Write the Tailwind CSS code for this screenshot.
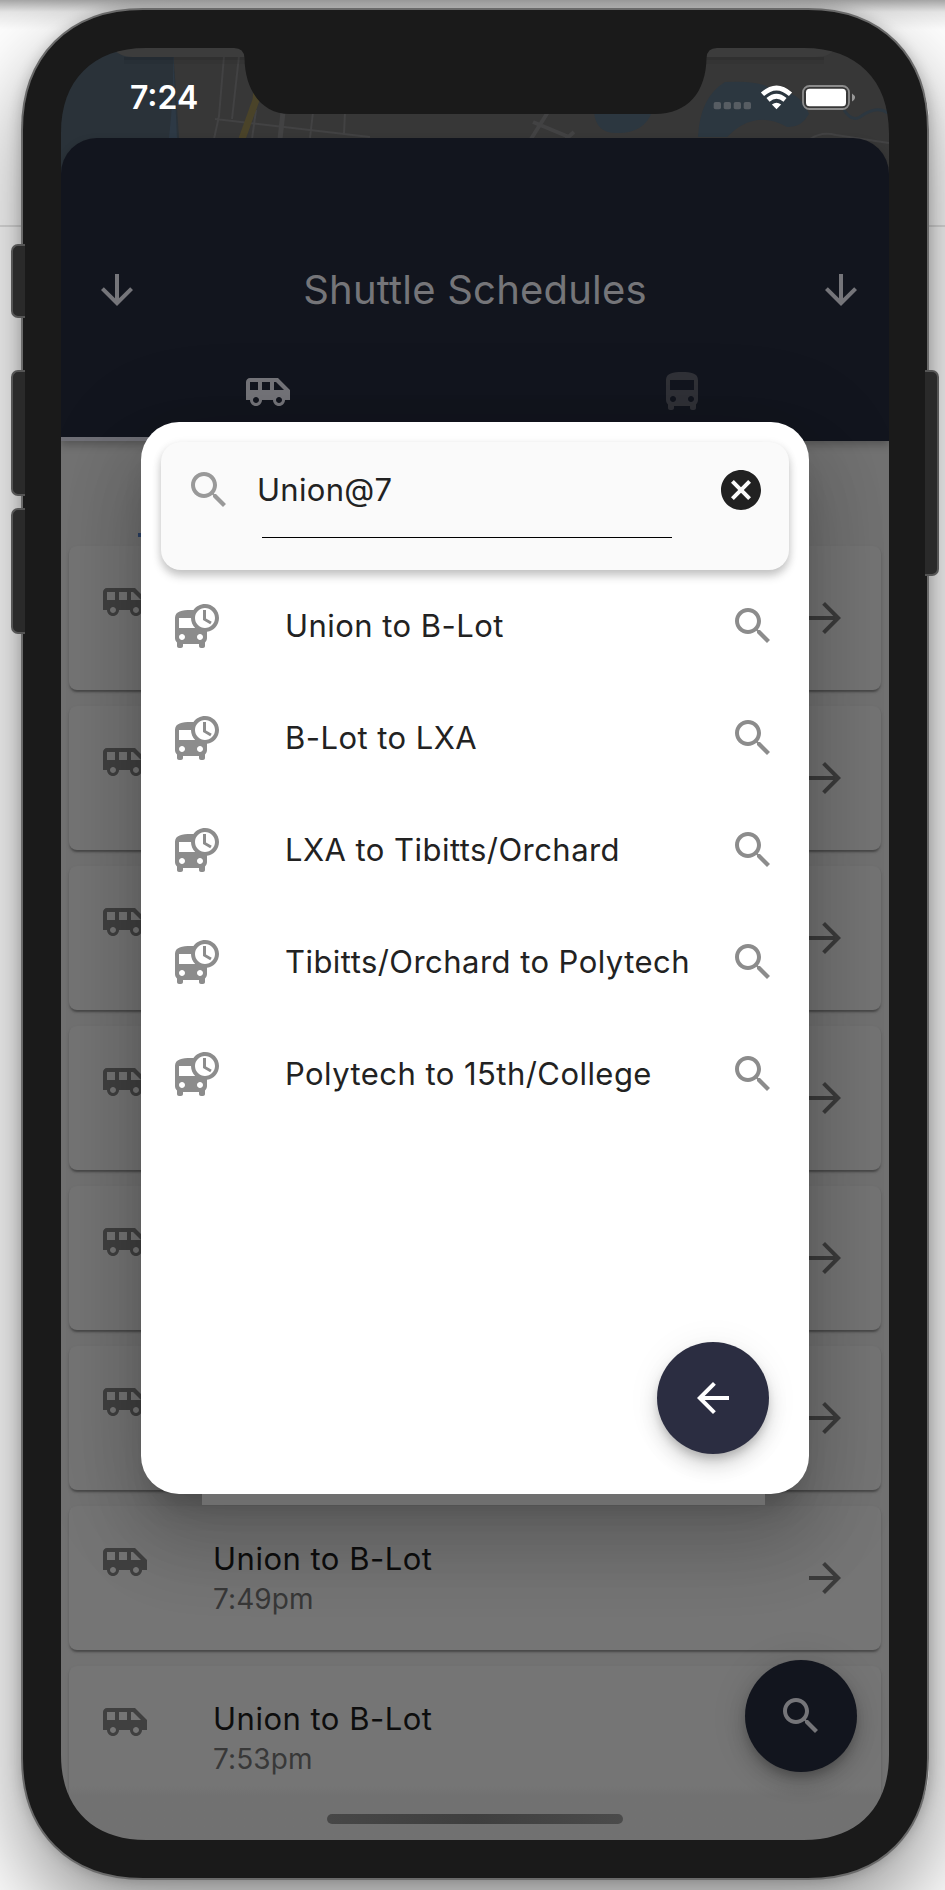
<!DOCTYPE html>
<html lang="en">
<head>
<meta charset="utf-8">
<title>Shuttle Schedules</title>
<script src="https://cdn.jsdelivr.net/npm/@tailwindcss/browser@4"></script>
</head>
<body class="bg-white">
<svg class="hidden">
  <symbol id="van" viewBox="0 0 24 24"><path d="M17 5H3c-1.1 0-2 .89-2 2v9h2c0 1.65 1.34 3 3 3s3-1.35 3-3h5.5c0 1.65 1.34 3 3 3s3-1.35 3-3H23v-5l-6-6zM3 11V7h4v4H3zm3 6.5c-.83 0-1.5-.67-1.5-1.5s.67-1.5 1.5-1.5 1.5.67 1.5 1.5-.67 1.5-1.5 1.5zm7-6.5H9V7h4v4zm4.5 6.5c-.83 0-1.5-.67-1.5-1.5s.67-1.5 1.5-1.5 1.5.67 1.5 1.5-.67 1.5-1.5 1.5zM15 11V7h1l4 4h-5z"/></symbol>
  <symbol id="bus" viewBox="0 0 24 24"><path d="M4 16c0 .88.39 1.67 1 2.22V20c0 .55.45 1 1 1h1c.55 0 1-.45 1-1v-1h8v1c0 .55.45 1 1 1h1c.55 0 1-.45 1-1v-1.78c.61-.55 1-1.34 1-2.22V6c0-3.5-3.58-4-8-4s-8 .5-8 4v10zm3.5 1c-.83 0-1.5-.67-1.5-1.5S6.67 14 7.5 14s1.5.67 1.5 1.5S8.33 17 7.5 17zm9 0c-.83 0-1.5-.67-1.5-1.5s.67-1.5 1.5-1.5 1.5.67 1.5 1.5-.67 1.5-1.5 1.5zm1.5-6H6V6h12v5z"/></symbol>
  <symbol id="departure" viewBox="0 0 24 24"><path d="M16 1c-2.4 0-4.52 1.21-5.78 3.05.01-.01.01-.02.02-.03C9.84 4 9.42 4 9 4c-4.42 0-8 .5-8 4v10c0 .88.39 1.67 1 2.22V22c0 .55.45 1 1 1h1c.55 0 1-.45 1-1v-1h8v1c0 .55.45 1 1 1h1c.55 0 1-.45 1-1v-1.78c.61-.55 1-1.34 1-2.22v-3.08c3.39-.49 6-3.39 6-6.92 0-3.87-3.13-7-7-7zM4.5 19c-.83 0-1.5-.67-1.5-1.5S3.67 16 4.5 16s1.5.67 1.5 1.5S5.33 19 4.5 19zM3 13V8h6c0 1.96.81 3.73 2.11 5H3zm10.5 6c-.83 0-1.5-.67-1.5-1.5s.67-1.5 1.5-1.5 1.5.67 1.5 1.5-.67 1.5-1.5 1.5zm2.5-6c-2.76 0-5-2.24-5-5s2.24-5 5-5 5 2.24 5 5-2.24 5-5 5zm.5-9H15v5l3.62 2.16.75-1.23-2.87-1.68z"/></symbol>
  <symbol id="search" viewBox="0 0 24 24"><path d="M15.5 14h-.79l-.28-.27C15.41 12.59 16 11.11 16 9.5 16 5.91 13.09 3 9.5 3S3 5.91 3 9.5 5.91 16 9.5 16c1.61 0 3.09-.59 4.23-1.57l.27.28v.79l5 4.99L20.49 19l-4.99-5zm-6 0C7.01 14 5 11.99 5 9.5S7.01 5 9.5 5 14 7.01 14 9.5 11.99 14 9.5 14z"/></symbol>
  <symbol id="down" viewBox="0 0 24 24"><path d="M20 12l-1.41-1.41L13 16.17V4h-2v12.17l-5.58-5.59L4 12l8 8 8-8z"/></symbol>
  <symbol id="forward" viewBox="0 0 24 24"><path d="M12 4l-1.41 1.41L16.17 11H4v2h12.17l-5.58 5.59L12 20l8-8z"/></symbol>
  <symbol id="back" viewBox="0 0 24 24"><path d="M20 11H7.83l5.59-5.59L12 4l-8 8 8 8 1.41-1.41L7.83 13H20v-2z"/></symbol>
  <symbol id="cancel" viewBox="0 0 24 24"><path d="M12 2C6.47 2 2 6.47 2 12s4.47 10 10 10 10-4.47 10-10S17.53 2 12 2zm5 13.59L15.59 17 12 13.41 8.41 17 7 15.59 10.59 12 7 8.41 8.41 7 12 10.59 15.59 7 17 8.41 13.41 12 17 15.59z"/></symbol>
</svg>

<div class="relative w-[945px] h-[1890px] overflow-hidden bg-white px-[61px] pt-12 font-['Inter',sans-serif]">
  <!-- desktop behind the device -->
  <div class="absolute inset-x-0 top-[225px] h-[2px] bg-[#e2e2e2]"></div>
  <div class="absolute left-[22px] top-[9px] w-[907px] h-[1870px] rounded-[115px] shadow-[0_40px_90px_4px_rgba(0,0,0,0.42),0_0_14px_1px_rgba(0,0,0,0.22)]"></div>
  <div class="absolute inset-x-0 top-0 h-[30px] bg-linear-to-b from-black/35 via-black/10 via-40% to-transparent"></div>

  <!-- screen -->
  <div class="relative w-[828px] h-[1792px] overflow-hidden rounded-[60px] bg-[#373737] flex flex-col">
    <svg class="absolute left-0 top-0" width="828" height="140" viewBox="61 48 828 140" fill="none">
      <path d="M61 48H173L179 138V188H61z" fill="#2a3239"/>
      <path d="M173 48l4 90h-8q5-44 4-90z" fill="#2d3945"/>
      <path d="M224 56l-5 60-5 23M239 56l-7 63M215 119l155 18M256 110l-4 29M313 112l-3 26M345 112l-1 22" stroke="#424243" stroke-width="2"/>
      <path d="M283 112l-3 27" stroke="#424243" stroke-width="5"/>
      <path d="M257 88l-1 12-14 39" stroke="#4a4329" stroke-width="7"/>
      <path d="M548 112l-17 27M533 122l36 15M566 139l8-7" stroke="#424243" stroke-width="4"/>
      <path d="M594 112q2 22 24 21 26 0 34-21z" fill="#2c3740"/>
      <path d="M698 137q2-40 27-55 38-2 46 8 30 0 38 24-8 14-22 13-18-10-34-6-12 2-26 16z" fill="#2c3740"/>
      <path d="M844 110q8 12 16 7 16-12 28-4" stroke="#2c3740" stroke-width="3"/>
      <path d="M810 139q12-8 26-4l53 8" stroke="#424243" stroke-width="2"/>
      <rect x="124" y="57" width="700" height="3" fill="#000" opacity=".12"/>
      <rect x="124" y="60" width="700" height="4" fill="#000" opacity=".05"/>
      <path d="M112 48h724q-6 9-20 9H132q-12 0-20-9z" fill="#3c3c3c"/>
    </svg>

    <header class="relative mt-[90px] h-[303px] shrink-0 rounded-t-[36px] bg-[#12151e] shadow-[0_4px_8px_rgba(0,0,0,0.25)] text-[#757579]">
      <div class="pt-[102px] pl-8 pr-6 flex items-center justify-between h-[202px]">
        <svg class="size-12 fill-[#75757a]"><use href="#down"/></svg>
        <h1 class="text-[40px] font-normal tracking-[0.2px] leading-none -ml-2">Shuttle Schedules</h1>
        <svg class="size-12 fill-[#75757a]"><use href="#down"/></svg>
      </div>
      <div class="grid grid-cols-2 h-[101px]">
        <div class="flex justify-center pt-7 border-b-4 border-[#6f6f76]"><svg class="size-12 fill-[#75757a]"><use href="#van"/></svg></div>
        <div class="flex justify-center pt-7"><svg class="size-12 fill-[#303137]"><use href="#bus"/></svg></div>
      </div>
    </header>

    <main class="grow bg-[#727272] pt-[105px] px-2 flex flex-col gap-4" id="list"></main>

    <!-- floating search button -->
    <div class="absolute left-[684px] top-[1612px] size-28 rounded-full bg-[#12151e] flex items-center justify-center shadow-[0_6px_10px_-2px_rgba(0,0,0,0.2),0_12px_20px_rgba(0,0,0,0.14),0_2px_36px_rgba(0,0,0,0.12)]">
      <svg class="size-12 fill-[#757579]"><use href="#search"/></svg>
    </div>
    <div class="absolute left-[266px] top-[1766px] w-[296px] h-[10px] rounded-full bg-linear-to-r from-[#474747] via-[#3f3f3f] to-[#4b4b4b]"></div>
    <div class="absolute left-[77px] top-[485px] w-3 h-1 bg-[#2b4165]"></div>

    <!-- dialog -->
    <div class="absolute left-20 top-[374px] w-[668px] h-[1072px] rounded-[38px] bg-white px-5 pt-5 shadow-[0_22px_30px_-14px_rgba(0,0,0,0.2),0_48px_76px_6px_rgba(0,0,0,0.14),0_18px_92px_16px_rgba(0,0,0,0.12)]">
      <div class="absolute left-[61px] top-full w-[563px] h-[11px] bg-[#6f6f6f]"></div>
      <div class="h-[128px] rounded-[20px] bg-[#fafafa] shadow-[0_6px_10px_rgba(0,0,0,0.2),0_2px_10px_rgba(0,0,0,0.08)] pt-6 pl-6 pr-6 flex items-start">
        <svg class="size-12 shrink-0 fill-[#999]"><use href="#search"/></svg>
        <div class="ml-6 w-[415px] h-[72px] flex flex-col">
          <span class="h-12 flex items-center text-[31px] tracking-[0.3px] text-[#222]">Union@7</span>
          <span class="mt-[23px] ml-[5px] h-px shrink-0 w-[410px] bg-black"></span>
        </div>
        <svg class="size-12 ml-auto shrink-0 fill-[#212121]"><use href="#cancel"/></svg>
      </div>
      <ul id="suggestions" class="-mx-5"></ul>
      <div class="absolute left-[516px] top-[920px] size-28 rounded-full bg-[#2b2d41] flex items-center justify-center shadow-[0_6px_10px_-2px_rgba(0,0,0,0.2),0_12px_20px_rgba(0,0,0,0.14),0_2px_36px_rgba(0,0,0,0.06)]">
        <svg class="size-12 fill-white"><use href="#back"/></svg>
      </div>
    </div>
  </div>

  <!-- device frame -->
  <svg class="absolute left-0 top-0" width="945" height="1890" fill="none">
    <path fill="#1a1a1a" fill-rule="evenodd" d="M22 130C22 56 69 9 143 9H808C882 9 928 56 928 130V1758C928 1832 882 1879 808 1879H143C69 1879 22 1832 22 1758Z
      M61 133V1755C61 1808 93 1840 146 1840H804C857 1840 889 1808 889 1755V133C889 80 857 48 804 48H717Q707 48 706.500 58C706 92 688 114 655 114H290C263 114 245 92 244.500 58Q244 48 234 48H146C93 48 61 80 61 133Z"/>
    <path stroke="#6a6a6a" stroke-width="2" d="M22 130C22 56 69 9 143 9H808C882 9 928 56 928 130V1758C928 1832 882 1879 808 1879H143C69 1879 22 1832 22 1758Z"/>
  </svg>

  <!-- side buttons -->
  <div class="absolute left-[11px] top-[244px] w-[14px] h-[74px] rounded-l-[7px] bg-[#2a2a2a] border-2 border-r-0 border-[#555]"></div>
  <div class="absolute left-[11px] top-[370px] w-[14px] h-[126px] rounded-l-[7px] bg-[#2a2a2a] border-2 border-r-0 border-[#555]"></div>
  <div class="absolute left-[11px] top-[508px] w-[14px] h-[126px] rounded-l-[7px] bg-[#2a2a2a] border-2 border-r-0 border-[#555]"></div>
  <div class="absolute left-[925px] top-[370px] w-[14px] h-[206px] rounded-r-[7px] bg-[#2a2a2a] border-2 border-l-0 border-[#555]"></div>

  <!-- status bar -->
  <div class="absolute left-[130px] top-[82px] h-8 flex items-center text-[32px] font-semibold text-white leading-none">7:24</div>
  <svg class="absolute left-[710px] top-[80px]" width="150" height="34" viewBox="710 80 150 34" fill="none">
    <g fill="#575d63"><rect x="713.700" y="102" width="7.300" height="7.300" rx="1.800"/><rect x="723.700" y="102" width="7.300" height="7.300" rx="1.800"/><rect x="733.700" y="102" width="7.300" height="7.300" rx="1.800"/><rect x="743.700" y="102" width="7.300" height="7.300" rx="1.800"/></g>
    <path fill="#fff" d="M776.500 109.200l-4.600-4.600q4.600-3.600 9.200 0z"/>
    <path stroke="#fff" stroke-width="4.800" d="M762.500 94.300q14-12.600 28 0M768 99.800q8.500-7.200 17 0"/>
    <rect x="803" y="86" width="46" height="23" rx="6.500" stroke="#8c8c8c" stroke-width="1.800"/>
    <rect x="806" y="88.700" width="40" height="17.600" rx="3.600" fill="#fff"/>
    <path d="M852 93.500q6 4 0 8z" fill="#999"/>
  </svg>
</div>

<template id="card">
  <article class="h-36 shrink-0 rounded-lg bg-[#757575] shadow-[0_4px_2px_-2px_rgba(0,0,0,0.2),0_2px_2px_rgba(0,0,0,0.14),0_2px_4px_rgba(0,0,0,0.08)] px-8 flex items-start last:h-[200px] last:bg-linear-to-b last:from-[#757575] last:from-60% last:to-[#717171] last:to-65%">
    <svg class="size-12 mt-8 fill-[#404040]"><use href="#van"/></svg>
    <div class="ml-16 mt-[34px] grow" data-label></div>
    <svg class="size-12 mt-12 fill-[#3c3c3c]"><use href="#forward"/></svg>
  </article>
</template>
<template id="label">
  <div class="text-[31px] leading-[38px] text-[#0d0d0d] tracking-[0.5px]">Union to B-Lot</div>
  <div class="mt-[4px] text-[28px] leading-[35px] text-[#383838] tracking-[0.1px]" data-time></div>
</template>
<template id="row">
  <li class="h-28 px-8 flex items-center">
    <svg class="size-12 fill-[#8c8c8c]"><use href="#departure"/></svg>
    <span class="ml-16 grow pb-[2px] text-[31px] leading-none tracking-[0.45px] text-[#222] whitespace-nowrap" data-name></span>
    <svg class="size-12 shrink-0 fill-[#8c8c8c]"><use href="#search"/></svg>
  </li>
</template>
<script>
  const clone = id => document.getElementById(id).content.cloneNode(true);
  // Cards fully behind the dialog carry no label.
  [null, null, null, null, null, null, '7:49pm', '7:53pm'].forEach(time => {
    const card = clone('card');
    if (time) {
      const label = clone('label');
      label.querySelector('[data-time]').textContent = time;
      card.querySelector('[data-label]').append(label);
    }
    document.getElementById('list').append(card);
  });
  ['Union to B-Lot', 'B-Lot to LXA', 'LXA to Tibitts/Orchard', 'Tibitts/Orchard to Polytech', 'Polytech to 15th/College'].forEach(name => {
    const row = clone('row');
    row.querySelector('[data-name]').textContent = name;
    document.getElementById('suggestions').append(row);
  });
</script>
</body>
</html>
